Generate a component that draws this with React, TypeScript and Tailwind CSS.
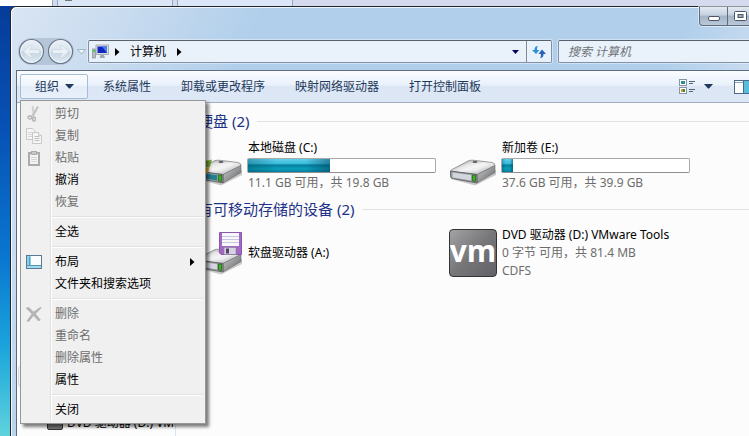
import type { ReactNode } from "react";

const DownCaret = ({ className = "" }: { className?: string }) => (
  <svg className={className} width="9" height="5" viewBox="0 0 9 5" fill="currentColor" aria-hidden="true">
    <path d="M0 0H9L5 4.5H4Z" />
  </svg>
);

const RightCaret = ({ className = "" }: { className?: string }) => (
  <svg className={className} width="5" height="8" viewBox="0 0 5 8" fill="currentColor" aria-hidden="true">
    <path d="M0 0L4.5 4L0 8Z" />
  </svg>
);

function RoundArrow({ label, flip }: { label: string; flip?: boolean }) {
  return (
    <button type="button" aria-label={label} className="size-[27px]">
      <svg width="27" height="27" viewBox="0 0 27 27" className={flip ? "-scale-x-100" : ""}>
        <defs>
          <linearGradient id={flip ? "orbF" : "orbB"} x1="0" y1="0" x2="0" y2="1">
            <stop offset="0" stopColor="#eaf0f6" />
            <stop offset=".48" stopColor="#dbe5ee" />
            <stop offset=".52" stopColor="#c6d5e3" />
            <stop offset="1" stopColor="#e0eaf3" />
          </linearGradient>
        </defs>
        <circle cx="13.500" cy="13.500" r="12" fill={flip ? "url(#orbF)" : "url(#orbB)"} stroke="#68798c" strokeWidth="1.200" />
        <circle cx="13.500" cy="13.500" r="10.800" fill="none" stroke="#f3f8fc" strokeWidth="1" opacity=".8" />
        <path d="M5 13.500L12 7.500H14.500L11.500 11.500H21.500V15.500H11.500L14.500 19.500H12Z" fill="#e9f0f6" stroke="#c6d2de" strokeWidth=".6" />
      </svg>
    </button>
  );
}

const ComputerIcon = () => (
  <svg width="17" height="16" viewBox="0 0 17 16" aria-hidden="true">
    <rect x="0.500" y="5" width="3" height="9" fill="#b9bdc2" stroke="#8b8f94" strokeWidth=".7" />
    <rect x="1" y="6" width="2" height="2" fill="#3ddc3d" />
    <rect x="4" y="1" width="12.500" height="9.500" fill="#d9dde2" stroke="#9ba0a8" strokeWidth=".8" />
    <rect x="5.500" y="2.500" width="9.500" height="6.500" fill="#1226c4" />
    <path d="M10 2.500H15V9Z" fill="#4f7df0" />
    <path d="M8.500 11H12L13 14H7.500Z" fill="#a4a8ad" />
  </svg>
);

const RefreshIcon = () => (
  <svg width="14" height="14" viewBox="0 0 14 14" aria-hidden="true">
    <path d="M6 1C3.500 1 2.500 2.500 2.500 5H0L4 9L7.500 5H5C5 3 5 2 6 1Z" fill="#2e8fd6" />
    <path d="M8 13C10.500 13 11.500 11.500 11.500 9H14L10 4.500L6.500 9H9C9 11 9 12 8 13Z" fill="#2463b8" />
  </svg>
);

const CutIcon = () => (
  <svg width="16" height="18" viewBox="0 0 16 18" fill="none" aria-hidden="true">
    <path d="M6.500 1L8 10" stroke="#d0d0d0" strokeWidth="2" />
    <path d="M12 1.500L6.500 11" stroke="#c0c0c0" strokeWidth="2" />
    <ellipse cx="4" cy="12.500" rx="2" ry="1.500" stroke="#b0b0b0" strokeWidth="1.300" />
    <ellipse cx="8" cy="14" rx="1.300" ry="2.200" stroke="#b0b0b0" strokeWidth="1.300" />
  </svg>
);

const CopyIcon = () => (
  <svg width="16" height="16" viewBox="0 0 16 16" fill="#f5f5f5" stroke="#c8c8c8" aria-hidden="true">
    <path d="M.5.5H6.500L8.500 2.500V11.500H.5Z" />
    <path d="M2 4.500H7M2 6.500H7M2 8.500H7" stroke="#d8d8d8" />
    <path d="M6.500 4.500H12.500L15.500 7.500V15.500H6.500Z" />
    <path d="M8.500 8.500H13.500M8.500 10.500H13.500M8.500 12.500H13.500" stroke="#c0c0c0" />
    <path d="M12.500 4.500V7.500H15.500" />
  </svg>
);

const PasteIcon = () => (
  <svg width="14" height="15" viewBox="0 0 14 15" aria-hidden="true">
    <rect x="2" y="2" width="10" height="12" fill="#f3f3f3" stroke="#ababab" strokeWidth="2" />
    <rect x="4.500" y=".5" width="5" height="3" fill="#c8c8c8" stroke="#ababab" />
    <path d="M4 6.500H10M4 8.500H10M4 10.500H10" stroke="#d6d6d6" />
  </svg>
);

const LayoutIcon = () => (
  <svg width="16" height="14" viewBox="0 0 16 14" aria-hidden="true">
    <rect x=".5" y=".5" width="15" height="13" fill="#fafcfd" stroke="#5d7895" />
    <rect x="1" y="1" width="4" height="9" fill="#8bd0e6" />
    <rect x="3" y="2" width="1" height="8" fill="#4d9fc0" />
    <rect x="1" y="10" width="14" height="3" fill="#9cdcf0" />
    <path d="M1 10.500H15" stroke="#5d8fae" />
  </svg>
);

const DeleteIcon = () => (
  <svg width="16" height="15" viewBox="0 0 16 15" aria-hidden="true">
    <path d="M0 1L3 .5L7.500 5L14 .5L15.500 .8L9.500 6.800L14.500 13L12.500 14L7.500 8.500L3 14.500L.8 14L6 7Z" fill="#b4b4b4" stroke="#a6a6a6" strokeWidth=".4" />
  </svg>
);

type Entry = { label: string; icon?: ReactNode; disabled?: boolean; submenu?: boolean };

const menuGroups: Entry[][] = [
  [
    { label: "剪切", icon: <CutIcon />, disabled: true },
    { label: "复制", icon: <CopyIcon />, disabled: true },
    { label: "粘贴", icon: <PasteIcon />, disabled: true },
    { label: "撤消" },
    { label: "恢复", disabled: true },
  ],
  [{ label: "全选" }],
  [{ label: "布局", icon: <LayoutIcon />, submenu: true }, { label: "文件夹和搜索选项" }],
  [
    { label: "删除", icon: <DeleteIcon />, disabled: true },
    { label: "重命名", disabled: true },
    { label: "删除属性", disabled: true },
    { label: "属性" },
  ],
  [{ label: "关闭" }],
];

function OrganizeMenu() {
  return (
    <div
      role="menu"
      aria-label="组织"
      className="absolute left-0 top-[26px] z-10 w-[186px] border border-[#979797] bg-[#f0f0f0] p-0.5 shadow-[3px_3px_3px_rgba(0,0,0,0.5)]"
    >
      {menuGroups.map((group, i) => (
        <div key={i} role="group">
          {i > 0 && (
            <div className="flex h-2">
              <div className="w-7 border-r border-[#e0e0e0]" />
              <div className="flex flex-1 items-center border-l border-white">
                <div className="h-0.5 w-full border-b border-t border-b-white border-t-[#e0e0e0]" />
              </div>
            </div>
          )}
          {group.map((item) => (
            <button
              key={item.label}
              type="button"
              role="menuitem"
              disabled={item.disabled}
              className="flex h-[22px] w-full items-center text-left text-black disabled:text-[#6d6d6d]"
            >
              <span className="flex h-full w-7 items-center justify-center border-r border-[#e0e0e0] pr-1.5">{item.icon}</span>
              <span className="flex h-full flex-1 items-center border-l border-white pl-[3px]">{item.label}</span>
              {item.submenu && <RightCaret className="mr-2" />}
            </button>
          ))}
        </div>
      ))}
    </div>
  );
}

const DriveBody = ({ id }: { id: string }) => (
  <>
    <defs>
      <linearGradient id={`${id}top`} x1="0" y1="0" x2="1" y2="1">
        <stop offset="0" stopColor="#9fa0a2" />
        <stop offset=".5" stopColor="#f0f0f1" />
        <stop offset="1" stopColor="#b5b6b8" />
      </linearGradient>
      <linearGradient id={`${id}side`} x1="0" y1="0" x2="1" y2="1">
        <stop offset="0" stopColor="#cfd0d1" />
        <stop offset="1" stopColor="#5e5f62" />
      </linearGradient>
    </defs>
    <path d="M2 38L26 44.500L47 34V29L28 41Z" fill="#000" opacity=".2" />
    <path d="M2 30.500Q1 29.500 3 28.500L19 20Q21 19 24 19.200L43 21.500Q46 22 46 24.500L28 33.500Z" fill={`url(#${id}top)`} stroke="#77787b" strokeWidth=".7" />
    <path d="M7 28.500L20 21.500L40 23.500L27 30.500Z" fill="#fff" opacity=".35" />
    <path d="M28 33.500L46 24.500V31.500L28 42Z" fill={`url(#${id}side)`} stroke="#6b6c6f" strokeWidth=".6" />
    <path d="M1.500 30L28 33.500V42L3 37.500Q1.500 37 1.500 35Z" fill="#98999c" stroke="#57585b" strokeWidth=".8" />
    <path d="M3.500 31.500L22 34V39.500L3.500 36.500Z" fill="#d3d5df" />
    <path d="M23.500 34H26.500V40.500L23.500 40Z" fill="#32b816" stroke="#244b19" strokeWidth=".6" />
    <ellipse cx="26" cy="21" rx="2.500" ry="1" fill="#5a5b5e" />
  </>
);

const SystemDrive = () => (
  <svg width="48" height="48" viewBox="0 0 48 48" aria-hidden="true">
    <DriveBody id="c" />
    <path d="M3 31.500L22 34V39.500L3 36.500Z" fill="#237e91" />
    <path d="M4 17Q11 21 17 18.500L15 25.500Q9 27 3 24Z" fill="#72aa35" />
    <path d="M3 25Q9 28 14.500 26L13 31.500Q8 33 2 30Z" fill="#e4b52c" />
  </svg>
);

const HardDrive = () => (
  <svg width="48" height="48" viewBox="0 0 48 48" aria-hidden="true">
    <DriveBody id="e" />
  </svg>
);

const FloppyDrive = () => (
  <svg width="48" height="48" viewBox="0 0 48 48" aria-hidden="true">
    <g transform="translate(0 1)">
      <DriveBody id="a" />
    </g>
    <path d="M24.500 3.500H46.500V25.500H26L24.500 24Z" fill="#a269c4" stroke="#8d57ad" />
    <rect x="27" y="4" width="17" height="13" fill="#f7f6fb" />
    <path d="M27 7.500H44M27 10.500H44M27 13.500H44" stroke="#c8c7de" />
    <rect x="29" y="18.500" width="12" height="7" fill="#d5d3dc" stroke="#8d7b9d" strokeWidth=".6" />
    <rect x="31" y="19.500" width="3" height="5" fill="#5b3f75" />
  </svg>
);

const VmwareLogo = () => (
  <div
    aria-hidden="true"
    className="flex size-12 items-center justify-center overflow-hidden rounded border border-[#333] bg-linear-to-br from-[#a3a3a5] via-[#77777a] to-[#626266] pb-1 font-['Open_Sans'] text-[30px] font-bold leading-none text-white"
  >
    vm
  </div>
);

function Usage({ label, percent }: { label: string; percent: number }) {
  return (
    <div
      role="progressbar"
      aria-label={label}
      aria-valuenow={percent}
      aria-valuemin={0}
      aria-valuemax={100}
      className="-ml-px my-px h-[15px] w-[189px] rounded-xs border border-[#a9a9a9] border-b-[#8f8f8f] bg-white"
    >
      <div
        className="h-full bg-[linear-gradient(90deg,rgba(0,70,90,.35),transparent_35%,transparent_70%,rgba(0,60,90,.5)),linear-gradient(#5fd0ea,#38bbdc_38%,#067d9b_45%,#0aa0bb_75%,#087f9d)]"
        style={{ width: `${percent}%` }}
      />
    </div>
  );
}

function Tile({ icon, children }: { icon: ReactNode; children: ReactNode }) {
  return (
    <button type="button" className="flex h-[54px] items-center gap-[5px] whitespace-nowrap text-left">
      <span className="shrink-0">{icon}</span>
      <span className="block leading-[18px] text-black">{children}</span>
    </button>
  );
}

function Group({ title, children }: { title: string; children: ReactNode }) {
  return (
    <section className="flex flex-col gap-[7px]">
      <h2 className="flex h-5 items-center gap-2 pl-[3px] text-[15px] text-[#1e3287]">
        <span className="whitespace-nowrap">{title}</span>
        <span className="h-px flex-1 bg-[#e2e2e2]" />
      </h2>
      <div className="grid grid-cols-[repeat(auto-fill,254px)]">{children}</div>
    </section>
  );
}

const commands = ["系统属性", "卸载或更改程序", "映射网络驱动器", "打开控制面板"];

export default function App() {
  return (
    <div className="flex h-screen flex-col overflow-hidden bg-[linear-gradient(#063b98,#0752b5_30%,#0a78d0_60%,#1ba6dc_80%,#5fd3dc)] font-['Noto_Sans','Noto_Sans_CJK_SC',sans-serif] text-xs">
      <div className="flex h-1.5 shrink-0 bg-[#d5daee]">
        <div className="w-[52px] bg-white" />
        <div className="w-1.5 border-x border-[#8fa9c4]" />
        <div className="w-[114px] bg-[#dbe7f6] pl-[7px]">
          <div className="h-px w-[7px] bg-[#777]" />
        </div>
        <div className="w-1.5 border-x border-[#8fa9c4]" />
        <div className="w-[115px] border-r border-[#8fa9c4] bg-[#dbe7f6]" />
      </div>

      <div className="ml-2.5 flex min-h-0 flex-1 flex-col rounded-tl-md border-l border-t border-[#20262e] bg-[linear-gradient(115deg,#d9e5f3,#c8dbef_110px,#b1cfeb_230px,#b1cfeb_620px,#c9dcf0_700px,#bcd4ec)] shadow-[inset_1px_1px_0_rgba(255,255,255,0.8)]">
        <header className="h-[63px] shrink-0">
          <div className="flex h-[19px] justify-end">
            <div className="flex h-[19px] rounded-bl border-b border-l border-[#5e6d7e] bg-[linear-gradient(#e3eaf2,#c6d2df_45%,#a3b4c7_50%,#bac9d9)] shadow-[0_0_0_1px_rgba(255,255,255,0.5)]">
              <button type="button" aria-label="最小化" className="flex w-7 items-end justify-center border-r border-[#5e6d7e] pb-1">
                <span className="h-[5px] w-3 rounded-xs border border-[#4b5563] bg-white" />
              </button>
              <button type="button" aria-label="最大化" className="flex w-[21px] items-center justify-end overflow-hidden pr-0.5">
                <svg width="13" height="10" viewBox="0 0 13 10" aria-hidden="true">
                  <rect x=".5" y=".5" width="12" height="9" rx="1" fill="#fff" stroke="#4b5563" />
                  <rect x="4" y="3.500" width="5" height="3" fill="#9badc0" stroke="#4b5563" />
                </svg>
              </button>
            </div>
          </div>

          <div className="flex items-center pl-[7px] pt-3">
            <nav aria-label="导航" className="flex w-14 justify-between rounded-full bg-[#a9bbcd]/70">
              <RoundArrow label="后退" />
              <RoundArrow label="前进" flip />
            </nav>
            <button type="button" aria-label="最近的页面" className="flex w-3.5 justify-center">
              <svg width="9" height="6" viewBox="0 0 9 6" aria-hidden="true">
                <path d="M.5.5H8.500L4.500 5Z" fill="#edf4fb" stroke="#93a6bb" strokeWidth=".8" />
              </svg>
            </button>
            <div className="flex h-[23px] min-w-0 flex-1 items-center rounded-xs border border-[#8292a6] border-t-[#57616e] bg-[#e9f1fa] pl-[3px] text-black shadow-[0_0_0_1px_rgba(255,255,255,0.4)]">
              <ComputerIcon />
              <RightCaret className="ml-1.5 mr-[10px]" />
              <button type="button" className="whitespace-nowrap">计算机</button>
              <RightCaret className="ml-[11px]" />
              <button type="button" aria-label="以前的位置" className="ml-auto flex h-full w-5 items-center justify-start text-[#04045c]">
                <svg className="ml-1.5" width="7" height="4" viewBox="0 0 7 4" fill="currentColor" aria-hidden="true">
                  <path d="M0 0H7L3.500 4Z" />
                </svg>
              </button>
              <button type="button" aria-label="刷新" className="flex h-full w-[25px] items-center justify-center border-l border-[#7e8b9b]">
                <RefreshIcon />
              </button>
            </div>
            <input
              type="search"
              aria-label="搜索 计算机"
              placeholder="搜索 计算机"
              className="ml-1.5 h-[23px] w-[191px] shrink-0 rounded-l-xs border border-r-0 border-[#8292a6] border-t-[#57616e] bg-[#e9f1fa] pl-[9px] italic shadow-[0_0_0_1px_rgba(255,255,255,0.4)] placeholder:text-[#6d7178]"
            />
          </div>
        </header>

        <div className="ml-[5px] flex min-h-0 flex-1 flex-col border-l border-t border-[#5d6b7c] bg-[#fcfcfc]">
          <div role="toolbar" aria-label="命令" className="flex h-8 shrink-0 items-center border-b border-[#a0afc3] bg-[linear-gradient(#fafcff,#e9f1fb_45%,#dce6f4_50%,#dde8f6)] pl-[3px] text-[#1e395b]">
            <div className="relative">
              <button
                type="button"
                aria-haspopup="menu"
                aria-expanded="true"
                className="flex h-[25px] w-[68px] items-center gap-1.5 rounded-xs border border-[#a6bdda] bg-[linear-gradient(#fafcfe,#eff5fc_45%,#e3ecf8_50%,#e8f0fa)] pl-3.5"
              >
                组织
                <DownCaret />
              </button>
              <OrganizeMenu />
            </div>
            {commands.map((c) => (
              <button key={c} type="button" className="whitespace-nowrap px-[15px]">
                {c}
              </button>
            ))}
            <div className="ml-auto flex items-center">
              <button type="button" aria-label="更改您的视图" className="flex items-center gap-2">
                <svg width="17" height="16" viewBox="0 0 17 16" aria-hidden="true">
                  <rect x=".5" y=".5" width="7" height="6" fill="#fff" stroke="#8794a5" />
                  <rect x="2" y="2" width="4" height="3" fill="#2c8c9c" />
                  <rect x=".5" y="8.500" width="7" height="6" fill="#fff" stroke="#8794a5" />
                  <rect x="2" y="10" width="2" height="3" fill="#d9952b" />
                  <rect x="4" y="10" width="2" height="3" fill="#3a8a3a" />
                  <path d="M10 2.500H16M10 4.500H14M10 10.500H16M10 12.500H14" stroke="#51647c" />
                </svg>
                <DownCaret />
              </button>
              <button type="button" aria-label="显示预览窗格" className="ml-[21px] w-[15px] overflow-hidden">
                <svg className="max-w-none" width="18" height="14" viewBox="0 0 18 14" aria-hidden="true">
                  <rect x=".5" y=".5" width="17" height="13" fill="#fdfefe" stroke="#4a6788" />
                  <path d="M1 2.500H10" stroke="#8fa8c4" />
                  <rect x="10" y="1" width="7" height="12" fill="#58bddb" />
                  <path d="M9.500 1V13" stroke="#4a6788" />
                </svg>
              </button>
            </div>
          </div>

          <div className="flex min-h-0 flex-1">
            <nav aria-label="文件夹" className="flex w-[159px] shrink-0 flex-col overflow-hidden border-r border-[#d6e5f5] pl-px pr-0.5 pt-[262px]">
              <div className="h-[23px] shrink-0 rounded-sm border border-[#d9d9d9] bg-[#f4f4f4]" />
              <a href="#dvd" className="mt-6 flex h-[22px] shrink-0 items-center gap-1 overflow-hidden whitespace-nowrap pl-[29px] text-black">
                <span className="h-3.5 w-4 shrink-0 rounded-xs border border-[#333] bg-[#77777a]" />
                DVD 驱动器 (D:) VM
              </a>
            </nav>
            <main className="flex min-w-0 flex-1 flex-col gap-[7px] overflow-hidden pl-[19px] pt-2">
              <Group title="硬盘 (2)">
                <Tile icon={<SystemDrive />}>
                  <span className="block">本地磁盘 (C:)</span>
                  <Usage label="本地磁盘 (C:)" percent={44} />
                  <span className="block text-[#6d6d6d]">11.1 GB 可用，共 19.8 GB</span>
                </Tile>
                <Tile icon={<HardDrive />}>
                  <span className="block">新加卷 (E:)</span>
                  <Usage label="新加卷 (E:)" percent={6} />
                  <span className="block text-[#6d6d6d]">37.6 GB 可用，共 39.9 GB</span>
                </Tile>
              </Group>
              <Group title="有可移动存储的设备 (2)">
                <Tile icon={<FloppyDrive />}>软盘驱动器 (A:)</Tile>
                <Tile icon={<VmwareLogo />}>
                  <span className="block">DVD 驱动器 (D:) VMware Tools</span>
                  <span className="block text-[#6d6d6d]">0 字节 可用，共 81.4 MB</span>
                  <span className="block text-[#6d6d6d]">CDFS</span>
                </Tile>
              </Group>
            </main>
          </div>
        </div>
      </div>
    </div>
  );
}
